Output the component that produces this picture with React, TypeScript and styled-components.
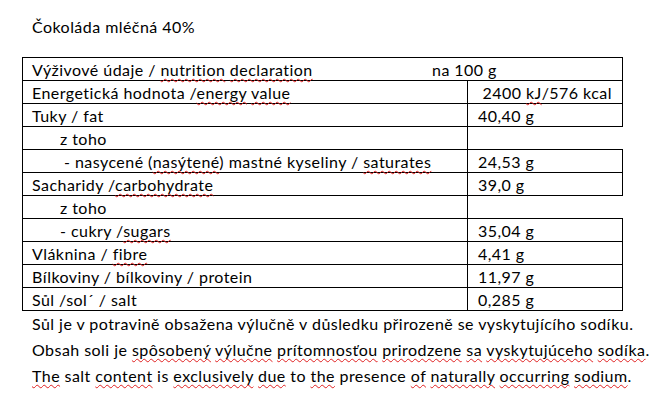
import React from 'react';
import styled, {createGlobalStyle} from 'styled-components';

const GlobalStyle = createGlobalStyle`
  html, body {
    margin: 0;
    background: #fff;
  }
  body {
    font-family: Lato, "Open Sans", "Liberation Sans", sans-serif;
    font-size: 16px;
    letter-spacing: 0.45px;
    color: #000;
  }
`;

const Page = styled.div`
  width: 670px;
  height: 402px;
  padding: 17px 0 0 22px;
  box-sizing: border-box;
  overflow: hidden;
`;

const Title = styled.p`
  margin: 0 0 20px 10px;
  line-height: 20px;
`;

const Table = styled.table`
  border-collapse: collapse;
  width: 600px;
  table-layout: fixed;
`;

const Row = styled.tr`
  height: 23px;
`;

const Cell = styled.td<{$indent?: number; $open?: boolean}>`
  border: 1px solid #000;
  ${p => p.$open && 'border-right-color: transparent;'}
  padding: 2px 0 0 ${p => 9 + (p.$indent || 0)}px;
  line-height: 19px;
  white-space: nowrap;
  vertical-align: top;
`;

const ValueCell = styled(Cell)`
  padding-left: 10px;
`;

const Per = styled.span`
  display: inline-block;
  width: 400px;
`;

const Note = styled.p`
  margin: 0 0 6.5px 10px;
  line-height: 19.5px;
  white-space: nowrap;
`;

const Notes = styled.div`
  padding-top: 3px;
`;

// Word-style spelling squiggle
const Spell = styled.span`
  text-decoration: underline wavy #e02020;
  text-decoration-thickness: 1px;
  text-decoration-skip-ink: none;
  text-underline-offset: 2px;
`;

type Item = {
    label: React.ReactNode
    value?: React.ReactNode
    indent?: number
}

const items: Item[] = [
    {label: <>Energetická hodnota /<Spell>energy</Spell> <Spell>value</Spell></>, value: <>&nbsp;2400 <Spell>kJ</Spell>/576 kcal</>},
    {label: 'Tuky / fat', value: '40,40 g'},
    {label: 'z toho', indent: 28},
    {label: <>- nasycené (<Spell>nasýtené</Spell>) mastné kyseliny / <Spell>saturates</Spell></>, value: '24,53 g', indent: 32},
    {label: <>Sacharidy /<Spell>carbohydrate</Spell></>, value: '39,0 g'},
    {label: 'z toho', indent: 28},
    {label: <>- cukry /<Spell>sugars</Spell></>, value: '35,04 g', indent: 28},
    {label: <>Vláknina / <Spell>fibre</Spell></>, value: '4,41 g'},
    {label: 'Bílkoviny / bílkoviny / protein', value: '11,97 g'},
    {label: 'Sůl /sol´ / salt', value: '0,285 g'},
];

function App() {
    return (
        <Page>
            <GlobalStyle/>
            <Title>Čokoláda mléčná 40%</Title>
            <Table>
                <colgroup>
                    <col style={{width: 445}}/>
                    <col style={{width: 155}}/>
                </colgroup>
                <tbody>
                    <Row>
                        <Cell colSpan={2}>
                            <Per>Výživové údaje / <Spell>nutrition</Spell> <Spell>declaration</Spell></Per>na 100 g
                        </Cell>
                    </Row>
                    {items.map((item, i) => (
                        <Row key={i}>
                            <Cell $indent={item.indent}>{item.label}</Cell>
                            <ValueCell $open={item.value === undefined}>{item.value}</ValueCell>
                        </Row>
                    ))}
                </tbody>
            </Table>
            <Notes>
                <Note>Sůl je v potravině obsažena výlučně v důsledku přirozeně se vyskytujícího sodíku.</Note>
                <Note>Obsah soli je <Spell>spôsobený</Spell> <Spell>výlučne</Spell> <Spell>prítomnosťou</Spell> <Spell>prirodzene</Spell> <Spell>sa</Spell> <Spell>vyskytujúceho</Spell> <Spell>sodíka</Spell>.</Note>
                <Note>
                    <Spell>The</Spell> salt <Spell>content</Spell> is <Spell>exclusively</Spell> <Spell>due</Spell> to <Spell>the</Spell> presence <Spell>of</Spell> <Spell>naturally</Spell> <Spell>occurring</Spell> <Spell>sodium</Spell>.
                </Note>
            </Notes>
        </Page>
    );
}

export default App;
